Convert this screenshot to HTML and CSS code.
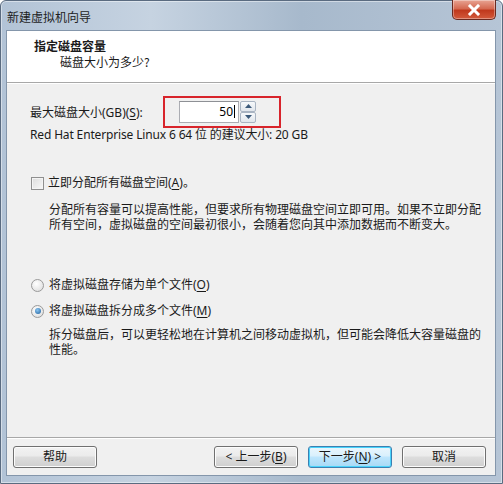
FILE: index.html
```html
<!DOCTYPE html>
<html lang="zh-CN">
<head>
<meta charset="utf-8">
<title>新建虚拟机向导</title>
<link rel="stylesheet" href="styles.css">
</head>
<body>
<div class="window">
  <div class="titlebar">
    <span class="title">新建虚拟机向导</span>
    <div class="close"><svg width="14" height="12" viewBox="0 0 14 12"><path d="M3 2 L11 10 M11 2 L3 10" stroke="#ffffff" stroke-width="3" stroke-linecap="square"/></svg></div>
  </div>
  <div class="client">
    <div class="header">
      <div class="h-title">指定磁盘容量</div>
      <div class="h-sub">磁盘大小为多少?</div>
    </div>
    <div class="body">
      <div class="size-row">
        <span class="label">最大磁盘大小(GB)(<u>S</u>):</span>
        <div class="highlight">
          <div class="spin">
            <div class="spin-input">50<span class="caret"></span></div>
            <div class="spin-btns">
              <div class="spin-btn"><svg width="7" height="4" viewBox="0 0 7 4"><path d="M0 4 L3.5 0 L7 4Z" fill="#3c5a7a"/></svg></div>
              <div class="spin-btn"><svg width="7" height="4" viewBox="0 0 7 4"><path d="M0 0 L3.5 4 L7 0Z" fill="#3c5a7a"/></svg></div>
            </div>
          </div>
        </div>
      </div>
      <div class="recommend">Red Hat Enterprise Linux 6 64 位 的建议大小: 20 GB</div>
      <div class="check-row"><span class="checkbox"></span><span>立即分配所有磁盘空间(<u>A</u>)。</span></div>
      <div class="desc d1">分配所有容量可以提高性能，但要求所有物理磁盘空间立即可用。如果不立即分配所有空间，虚拟磁盘的空间最初很小，会随着您向其中添加数据而不断变大。</div>
      <div class="radio-row r1"><span class="radio"></span><span>将虚拟磁盘存储为单个文件(<u>O</u>)</span></div>
      <div class="radio-row r2"><span class="radio on"><span class="dot"></span></span><span>将虚拟磁盘拆分成多个文件(<u>M</u>)</span></div>
      <div class="desc d2">拆分磁盘后，可以更轻松地在计算机之间移动虚拟机，但可能会降低大容量磁盘的性能。</div>
    </div>
    <div class="footer">
      <button class="btn">帮助</button>
      <div class="spacer"></div>
      <button class="btn">&lt; 上一步(<u>B</u>)</button>
      <button class="btn default">下一步(<u>N</u>) &gt;</button>
      <button class="btn">取消</button>
    </div>
  </div>
</div>
</body>
</html>
```

FILE: styles.css
```css
html, body {
  margin: 0;
  padding: 0;
  width: 503px;
  height: 484px;
  overflow: hidden;
  background: #ffffff;
}
body {
  font-family: "Noto Sans", "Noto Sans CJK SC", sans-serif;
  font-size: 12px;
  color: #1a1a1a;
}
u { text-decoration: underline; text-underline-offset: 2px; }
.window {
  width: 503px;
  height: 484px;
  box-sizing: border-box;
  border: 1px solid #5a6b80;
  border-radius: 6px 6px 0 0;
  background: linear-gradient(to right, #b2c3d6 0%, #c6d3e1 30%, #a7b9cc 60%, #b6c5d6 100%);
  display: flex;
  flex-direction: column;
  padding: 0 6px 7px 5px;
  box-shadow: inset 0 0 0 1px rgba(255,255,255,0.45);
}
.titlebar {
  height: 29px;
  display: flex;
  align-items: center;
  justify-content: space-between;
  flex-shrink: 0;
}
.title {
  font-family: "Noto Sans CJK SC", sans-serif;
  font-size: 12px;
  color: #1e1e1e;
  padding-left: 1px;
  padding-top: 1px;
}
.close {
  align-self: flex-start;
  width: 42px;
  height: 19px;
  margin-top: -1px;
  border: 1px solid #6b2a20;
  border-top: none;
  border-radius: 0 0 5px 5px;
  background: linear-gradient(to bottom, #e8a493 0%, #d56a52 45%, #c0391d 55%, #d35a3c 100%);
  display: flex;
  align-items: center;
  justify-content: center;
  box-shadow: inset 0 0 0 1px rgba(255,255,255,0.35);
}
.client {
  flex: 1;
  display: flex;
  flex-direction: column;
  border: 1px solid #8496ab;
  background: #f0f0f0;
}
.header {
  background: #ffffff;
  height: 52px;
  box-sizing: border-box;
  padding: 6px 0 0 27px;
  border-bottom: 1px solid #a8a8a8;
  font-family: "Noto Sans CJK SC", sans-serif;
}
.h-title {
  font-weight: bold;
  line-height: 17px;
  font-size: 12px;
}
.h-sub {
  line-height: 16px;
  padding-left: 26px;
}
.body {
  flex: 1;
  padding: 12px 0 0 23px;
  border-top: 1px solid #ffffff;
}
.size-row {
  display: flex;
  align-items: center;
  height: 31px;
}
.label {
  flex: 0 0 133px;
}
.highlight {
  flex: 0 0 118px;
  height: 32px;
  box-sizing: border-box;
  border: 2px solid #d8242b;
  display: flex;
  align-items: center;
  padding-left: 14px;
}
.spin {
  display: flex;
  height: 22px;
}
.spin-input {
  width: 60px;
  height: 22px;
  box-sizing: border-box;
  border: 1px solid #abadb3;
  border-top-color: #8e9095;
  background: #ffffff;
  text-align: right;
  padding-right: 3px;
  line-height: 20px;
  font-size: 12px;
  color: #000;
}
.caret {
  display: inline-block;
  width: 1px;
  height: 13px;
  background: #000;
  vertical-align: -2px;
  margin-left: 1px;
}
.spin-btns {
  display: flex;
  flex-direction: column;
  width: 16px;
  height: 22px;
  margin-left: 1px;
}
.spin-btn {
  flex: 1;
  box-sizing: border-box;
  border: 1px solid #a9b4c2;
  border-radius: 2px;
  background: linear-gradient(to bottom, #f7f9fb, #e1e6ec);
  display: flex;
  align-items: center;
  justify-content: center;
}
.recommend {
  line-height: 16px;
  letter-spacing: -0.15px;
}
.check-row, .radio-row {
  display: flex;
  align-items: center;
  line-height: 16px;
}
.check-row { margin-top: 32px; }
.checkbox {
  width: 11px;
  height: 11px;
  border: 1px solid #8f8f8f;
  background: linear-gradient(135deg, #dcdcdc, #f8f8f8);
  box-shadow: inset 0 0 0 1px #f4f4f4;
  margin-right: 4px;
  margin-left: 1px;
}
.desc {
  font-family: "Noto Sans CJK SC", sans-serif;
  line-height: 15px;
  padding-left: 19px;
  width: 440px;
}
.d1 { margin-top: 10px; }
.r1 { margin-top: 46px; }
.r2 { margin-top: 10px; }
.d2 { margin-top: 7px; }
.radio {
  width: 11px;
  height: 11px;
  border-radius: 50%;
  border: 1px solid #9a9a9a;
  background: radial-gradient(circle at 40% 35%, #ffffff, #d9d9d9);
  margin-right: 5px;
  margin-left: 1px;
  display: flex;
  align-items: center;
  justify-content: center;
}
.dot {
  width: 6px;
  height: 6px;
  border-radius: 50%;
  background: radial-gradient(circle at 40% 35%, #8ac6f2, #1e5d9a);
}
.footer {
  height: 38px;
  box-sizing: border-box;
  border-top: 1px solid #a8a8a8;
  box-shadow: inset 0 1px 0 #ffffff;
  display: flex;
  align-items: center;
  padding: 1px 9px 0 6px;
  gap: 10px;
}
.spacer { flex: 1; }
.btn {
  width: 84px;
  height: 22px;
  box-sizing: border-box;
  border: 1px solid #707070;
  border-radius: 3px;
  background: linear-gradient(to bottom, #f2f2f2 0%, #ebebeb 45%, #dddddd 50%, #cfcfcf 100%);
  box-shadow: inset 0 0 0 1px #fcfcfc;
  font-family: "Noto Sans", "Noto Sans CJK SC", sans-serif;
  font-size: 12px;
  color: #1a1a1a;
  padding: 0;
  margin: 0;
  line-height: 18px;
}
.btn.default {
  border-color: #3c7fb1;
  box-shadow: inset 0 0 0 1px #48d3fb;
  background: linear-gradient(to bottom, #eaf6fd 0%, #d9f0fc 45%, #bee6fd 50%, #a7d9f5 100%);
}
```
